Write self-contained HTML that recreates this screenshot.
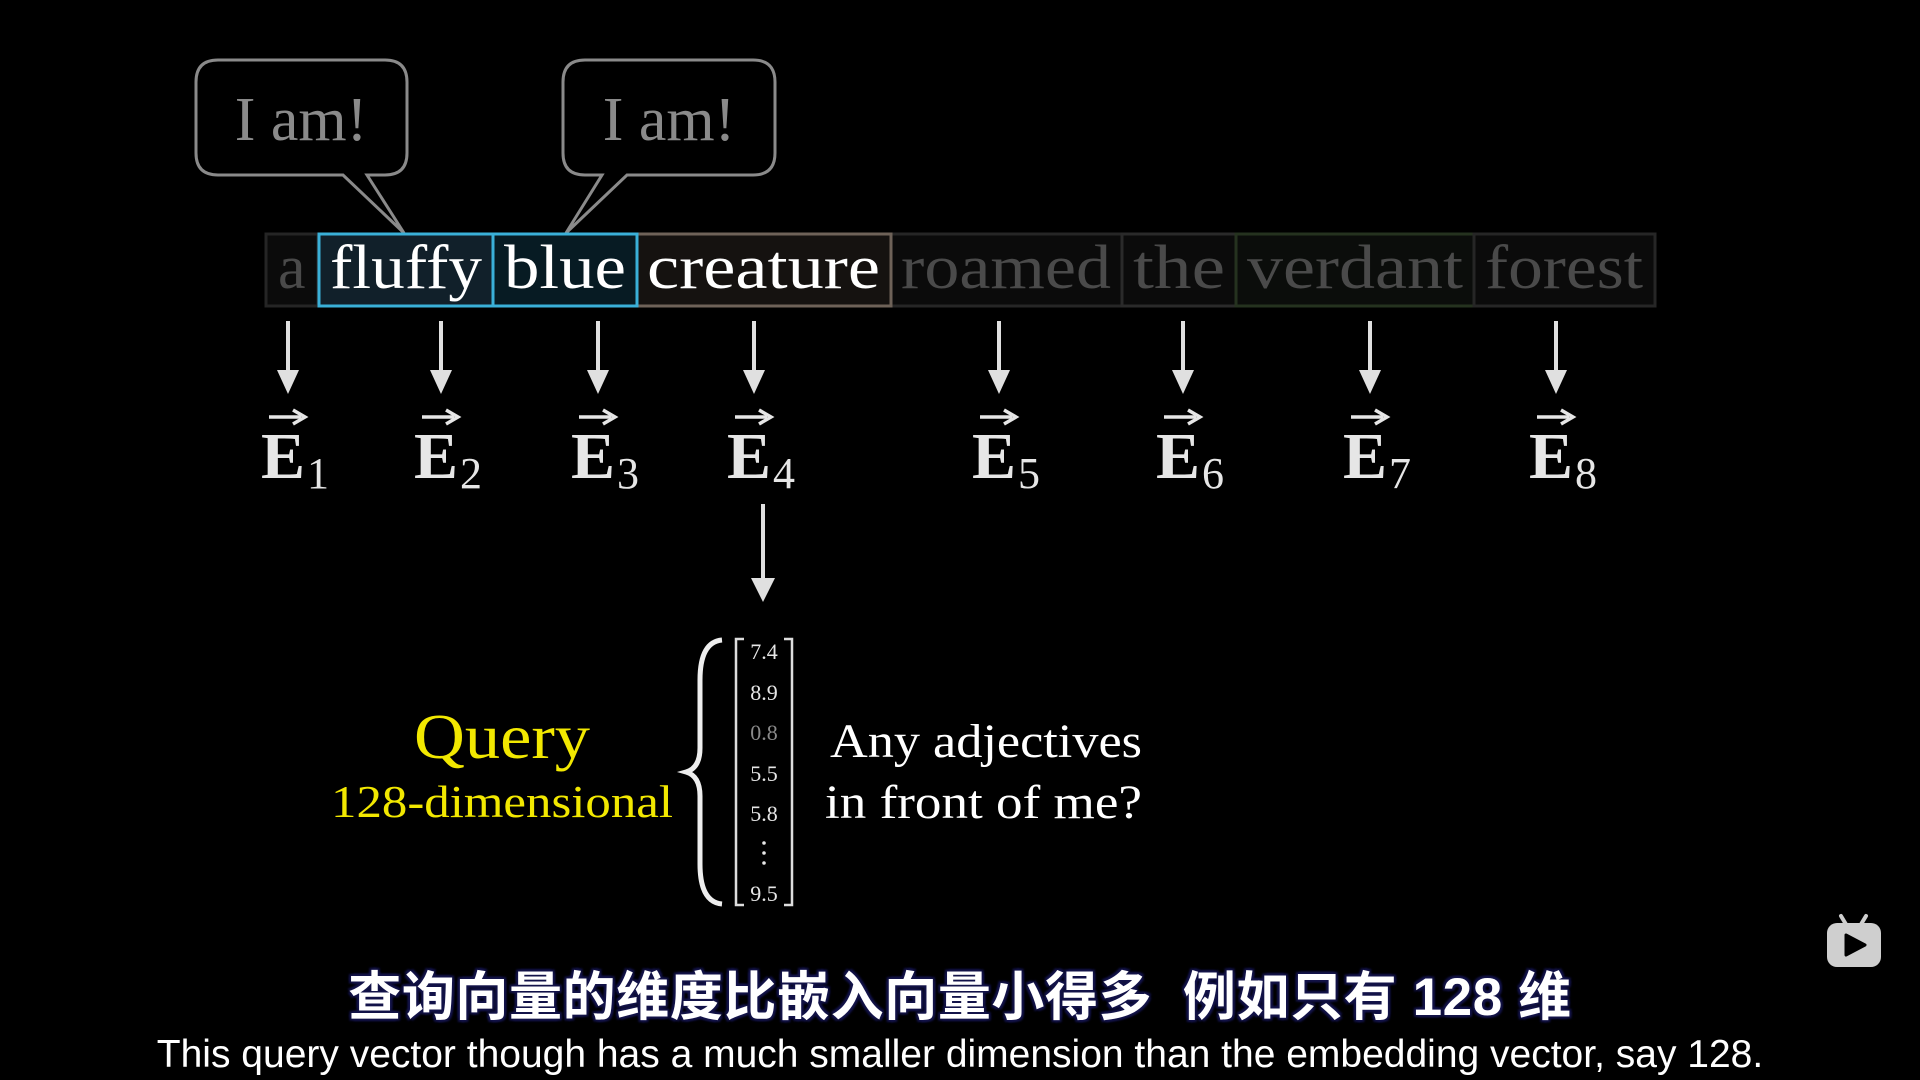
<!DOCTYPE html>
<html><head><meta charset="utf-8"><style>
html,body{margin:0;padding:0;background:#000;width:1920px;height:1080px;overflow:hidden}
svg{position:absolute;left:0;top:0}
.cn{position:absolute;left:0;width:1920px;top:962px;text-align:center;font-family:"Liberation Sans","Noto Sans CJK SC",sans-serif;font-weight:bold;font-size:53px;letter-spacing:0.6px;color:#fff;line-height:72px;
text-shadow:0 0 3px #14144a,2px 2px 2px #14144a,-2px -2px 2px #14144a,2px -2px 2px #14144a,-2px 2px 2px #14144a}
.en{position:absolute;left:0;width:1920px;top:1033px;text-align:center;font-family:"Liberation Sans",sans-serif;font-size:39px;color:#fff;line-height:44px}
</style></head><body>
<svg width="1920" height="1080" viewBox="0 0 1920 1080" font-family="'Liberation Serif',serif">
<defs>
<g id="ar"><line x1="0" y1="321" x2="0" y2="378" stroke-width="4"/><path d="M-11 370 L11 370 L0 394 Z" stroke="none"/></g>
<g id="ev">
<text x="0" y="478" font-size="66" font-weight="bold">E</text>
<line x1="8" y1="417" x2="40" y2="417" stroke="#e6e6e6" stroke-width="3.5"/>
<path d="M32 410 L44 417 L32 424" fill="none" stroke="#e6e6e6" stroke-width="3.5"/>
</g>
</defs>
<g fill="#000" stroke="#8a8a8a" stroke-width="3">
<path d="M222 60 H385 Q407 60 407 82 V153 Q407 175 385 175 H367 L404 233 L343 175 H218 Q196 175 196 153 V82 Q196 60 218 60 Z"/>
<path d="M588 60 H753 Q775 60 775 82 V153 Q775 175 753 175 H627 L566 233 L602 175 H585 Q563 175 563 153 V82 Q563 60 585 60 Z"/>
</g>
<g fill="#8a8a8a" font-size="62" text-anchor="middle">
<text x="301" y="140">I am!</text>
<text x="669" y="140">I am!</text>
</g>
<g stroke-width="3">
<rect x="266" y="234" width="52" height="72" fill="#0b0b0b" stroke="#252525"/>
<rect x="891" y="234" width="231" height="72" fill="#0b0b0b" stroke="#262626"/>
<rect x="1122" y="234" width="114" height="72" fill="#0b0b0b" stroke="#2a2a2a"/>
<rect x="1236" y="234" width="238" height="72" fill="#0b0d0b" stroke="#25321f"/>
<rect x="1474" y="234" width="181" height="72" fill="#0b0b0b" stroke="#262626"/>
<rect x="637" y="234" width="254" height="72" fill="#151210" stroke="#6e6258"/>
<rect x="319" y="234" width="174" height="72" fill="#11202a" stroke="#3ab0d8"/>
<rect x="493" y="234" width="144" height="72" fill="#071b23" stroke="#3ab0d8"/>
</g>
<g font-size="62">
<text x="278" y="288" fill="#4a4a4a">a</text>
<text x="330" y="288" fill="#fff" textLength="152" lengthAdjust="spacingAndGlyphs">fluffy</text>
<text x="504" y="288" fill="#fff" textLength="122" lengthAdjust="spacingAndGlyphs">blue</text>
<text x="647" y="288" fill="#fff" textLength="233" lengthAdjust="spacingAndGlyphs">creature</text>
<text x="901" y="288" fill="#4a4a4a" textLength="210" lengthAdjust="spacingAndGlyphs">roamed</text>
<text x="1133" y="288" fill="#4a4a4a" textLength="92" lengthAdjust="spacingAndGlyphs">the</text>
<text x="1247" y="288" fill="#4a4a4a" textLength="216" lengthAdjust="spacingAndGlyphs">verdant</text>
<text x="1485" y="288" fill="#4a4a4a" textLength="158" lengthAdjust="spacingAndGlyphs">forest</text>
</g>
<g fill="#e0e0e0" stroke="#e0e0e0">
<use href="#ar" x="288"/><use href="#ar" x="441"/><use href="#ar" x="598"/><use href="#ar" x="754"/>
<use href="#ar" x="999"/><use href="#ar" x="1183"/><use href="#ar" x="1370"/><use href="#ar" x="1556"/>
<line x1="763" y1="504" x2="763" y2="582" stroke-width="4"/><path d="M751 578 L775 578 L763 602 Z" stroke="none"/>
</g>
<g fill="#e6e6e6" font-size="44">
<use href="#ev" x="261"/><text x="307" y="488">1</text>
<use href="#ev" x="414"/><text x="460" y="488">2</text>
<use href="#ev" x="571"/><text x="617" y="488">3</text>
<use href="#ev" x="727"/><text x="773" y="488">4</text>
<use href="#ev" x="972"/><text x="1018" y="488">5</text>
<use href="#ev" x="1156"/><text x="1202" y="488">6</text>
<use href="#ev" x="1343"/><text x="1389" y="488">7</text>
<use href="#ev" x="1529"/><text x="1575" y="488">8</text>
</g>
<g fill="#f2e800" text-anchor="middle">
<text x="502" y="758" font-size="64" textLength="176" lengthAdjust="spacingAndGlyphs">Query</text>
<text x="502" y="817" font-size="46" textLength="342" lengthAdjust="spacingAndGlyphs">128-dimensional</text>
</g>
<path d="M722 640 Q700 642 700 680 V748 Q700 768 686 772 Q700 776 700 796 V864 Q700 902 722 904" fill="none" stroke="#eee" stroke-width="5"/>
<g fill="none" stroke="#ddd" stroke-width="2.5">
<path d="M744 639 H736 V905 H744"/><path d="M784 639 H792 V905 H784"/>
</g>
<g fill="#e6e6e6" font-size="22" text-anchor="middle">
<text x="764" y="659">7.4</text>
<text x="764" y="700">8.9</text>
<text x="764" y="740" fill="#8a8a8a">0.8</text>
<text x="764" y="781">5.5</text>
<text x="764" y="821">5.8</text>
<text x="764" y="901">9.5</text>
</g>
<g fill="#e6e6e6"><circle cx="764" cy="843" r="1.8"/><circle cx="764" cy="853" r="1.8"/><circle cx="764" cy="863" r="1.8"/></g>
<g fill="#fff" font-size="48">
<text x="830" y="757" textLength="312" lengthAdjust="spacingAndGlyphs">Any adjectives</text>
<text x="825" y="818" textLength="317" lengthAdjust="spacingAndGlyphs">in front of me?</text>
</g>
<g fill="#cfcfcf">
<rect x="1827" y="923" width="54" height="44" rx="10"/>
<path d="M1841 916 L1847 926" stroke="#cfcfcf" stroke-width="4" stroke-linecap="round"/>
<path d="M1866 916 L1860 926" stroke="#cfcfcf" stroke-width="4" stroke-linecap="round"/>
<path d="M1846 935 L1865 945 L1846 955 Z" fill="#000" stroke="#000" stroke-width="3" stroke-linejoin="round"/>
</g>
</svg>
<div class="cn">查询向量的维度比嵌入向量小得多&nbsp;&nbsp;例如只有 128 维</div>
<div class="en">This query vector though has a much smaller dimension than the embedding vector, say 128.</div>
</body></html>
